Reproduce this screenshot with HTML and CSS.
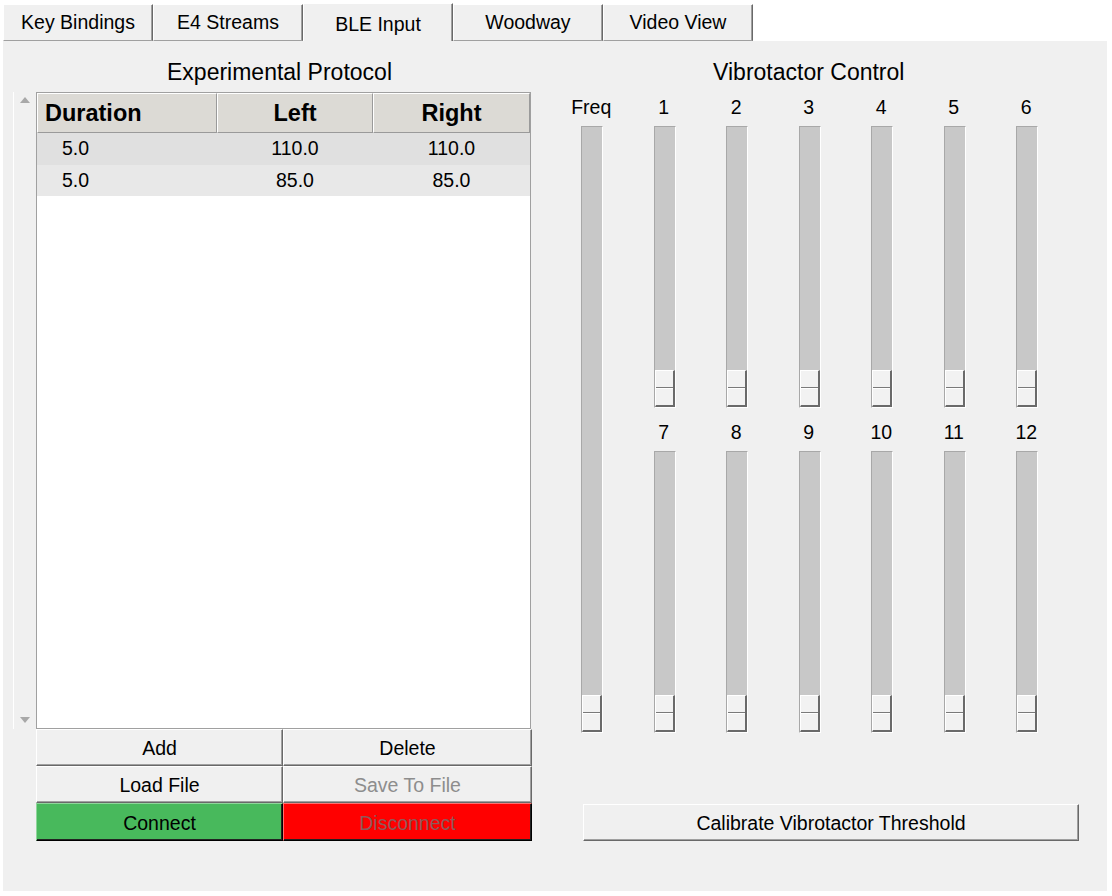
FILE: index.html
```html
<!DOCTYPE html>
<html>
<head>
<meta charset="utf-8">
<link rel="stylesheet" href="styles.css">
</head>
<body>
<div class="tabs">
  <div class="tab">Key Bindings</div>
  <div class="tab">E4 Streams</div>
  <div class="tab selected">BLE Input</div>
  <div class="tab">Woodway</div>
  <div class="tab">Video View</div>
</div>
<div class="panel">
  <section class="protocol">
    <h2 class="title">Experimental Protocol</h2>
    <div class="proto-body">
      <div class="scrollbar"><span class="arrow up"></span><span class="arrow down"></span></div>
      <div class="table">
        <div class="thead">
          <div class="th first">Duration</div>
          <div class="th">Left</div>
          <div class="th">Right</div>
        </div>
        <div class="row row1"><div class="td first">5.0</div><div class="td">110.0</div><div class="td">110.0</div></div>
        <div class="row row2"><div class="td first">5.0</div><div class="td">85.0</div><div class="td">85.0</div></div>
      </div>
    </div>
    <div class="buttons">
      <button class="btn">Add</button>
      <button class="btn">Delete</button>
      <button class="btn">Load File</button>
      <button class="btn disabled">Save To File</button>
      <button class="btn connect">Connect</button>
      <button class="btn disconnect">Disconnect</button>
    </div>
  </section>
  <section class="vibro">
    <h2 class="title">Vibrotactor Control</h2>
    <div class="sliders">
      <div class="lbl">Freq</div>
      <div class="slider freq"><div class="thumb"><span class="half top"></span><span class="half bottom"></span></div></div>
      <div class="lbl">1</div><div class="lbl">2</div><div class="lbl">3</div><div class="lbl">4</div><div class="lbl">5</div><div class="lbl">6</div>
      <div class="slider"><div class="thumb"><span class="half top"></span><span class="half bottom"></span></div></div>
      <div class="slider"><div class="thumb"><span class="half top"></span><span class="half bottom"></span></div></div>
      <div class="slider"><div class="thumb"><span class="half top"></span><span class="half bottom"></span></div></div>
      <div class="slider"><div class="thumb"><span class="half top"></span><span class="half bottom"></span></div></div>
      <div class="slider"><div class="thumb"><span class="half top"></span><span class="half bottom"></span></div></div>
      <div class="slider"><div class="thumb"><span class="half top"></span><span class="half bottom"></span></div></div>
      <div class="lbl">7</div><div class="lbl">8</div><div class="lbl">9</div><div class="lbl">10</div><div class="lbl">11</div><div class="lbl">12</div>
      <div class="slider"><div class="thumb"><span class="half top"></span><span class="half bottom"></span></div></div>
      <div class="slider"><div class="thumb"><span class="half top"></span><span class="half bottom"></span></div></div>
      <div class="slider"><div class="thumb"><span class="half top"></span><span class="half bottom"></span></div></div>
      <div class="slider"><div class="thumb"><span class="half top"></span><span class="half bottom"></span></div></div>
      <div class="slider"><div class="thumb"><span class="half top"></span><span class="half bottom"></span></div></div>
      <div class="slider"><div class="thumb"><span class="half top"></span><span class="half bottom"></span></div></div>
    </div>
    <button class="btn calib">Calibrate Vibrotactor Threshold</button>
  </section>
</div>
</body>
</html>
```

FILE: styles.css
```css
* { box-sizing: border-box; }

body {
  margin: 0;
  background: #fff;
  font-family: "Liberation Sans", Arial, sans-serif;
  font-size: 19.5px;
  color: #000;
  width: 1112px;
  height: 896px;
  overflow: hidden;
}

.tabs {
  display: flex;
  align-items: flex-end;
  padding-left: 3px;
  height: 41px;
}

.tab {
  width: 150px;
  height: 37px;
  background: #f0f0f0;
  border-top: 1px solid #fff;
  border-left: 1px solid #fff;
  border-right: 1px solid #696969;
  border-bottom: 1px solid #a0a0a0;
  box-shadow: inset -1px 0 0 #a0a0a0;
  display: flex;
  align-items: center;
  justify-content: center;
}

.tab.selected {
  height: 38px;
  border-bottom: none;
  padding-top: 3px;
}

.panel {
  margin-left: 3px;
  width: 1104px;
  height: 850px;
  background: #f0f0f0;
  display: flex;
  padding: 17px 0 0 10px;
}

.title {
  margin: 0;
  font-weight: normal;
  font-size: 23px;
  line-height: 28px;
  text-align: center;
}

.protocol {
  width: 519px;
  display: flex;
  flex-direction: column;
}

.protocol .title {
  margin-left: 23px;
  padding-right: 9px;
}

.proto-body {
  display: flex;
  margin-top: 6px;
  height: 637px;
}

.scrollbar {
  width: 23px;
  border-left: 1px solid #fff;
  display: flex;
  flex-direction: column;
  justify-content: space-between;
  align-items: center;
  padding: 5px 0 6px;
}

.arrow {
  width: 0;
  height: 0;
  border-left: 5px solid transparent;
  border-right: 5px solid transparent;
}

.arrow.up { border-bottom: 6px solid #a8a8a8; }
.arrow.down { border-top: 6px solid #a8a8a8; }

.table {
  width: 495px;
  border: 1px solid #a0a0a0;
  background: #fff;
}

.thead {
  display: grid;
  grid-template-columns: 180px 156px 157px;
  height: 40px;
}

.th {
  background: #dcdad5;
  border-top: 1px solid #fff;
  border-left: 1px solid #fff;
  border-right: 1px solid #9a9a9a;
  border-bottom: 1px solid #9a9a9a;
  font-weight: bold;
  font-size: 23.5px;
  display: flex;
  align-items: center;
  justify-content: center;
  padding-top: 1px;
}

.th.first {
  justify-content: flex-start;
  padding-left: 7px;
}

.row {
  display: grid;
  grid-template-columns: 180px 156px 157px;
  height: 31.5px;
  align-items: center;
}

.row1 { background: #e0e0e0; }
.row2 { background: #e8e8e8; }

.td { text-align: center; }
.td.first { text-align: left; padding-left: 25px; }

.buttons {
  display: grid;
  grid-template-columns: 247px 249px;
  grid-template-rows: 37px 37px 38px;
  margin-left: 23px;
}

.btn {
  font: inherit;
  color: #000;
  background: #f0f0f0;
  border-top: 1px solid #fff;
  border-left: 1px solid #fff;
  border-right: 1px solid #696969;
  border-bottom: 1px solid #696969;
  box-shadow: inset -1px -1px 0 #a0a0a0;
  display: flex;
  align-items: center;
  justify-content: center;
  padding: 2px 0 0;
}

.btn.disabled { color: #8d8d8d; }

.btn.connect {
  background: #48b95c;
  border-top-color: #8fd69b;
  border-left-color: #8fd69b;
  border-right-color: #000;
  border-bottom-color: #000;
  box-shadow: inset -1px -1px 0 #222;
}

.btn.disconnect {
  background: #ff0000;
  color: #8e5a5a;
  border-top-color: #ff7070;
  border-left-color: #ff7070;
  border-right-color: #000;
  border-bottom-color: #000;
  box-shadow: inset -1px -1px 0 #222;
}

.vibro {
  margin-left: 23px;
  width: 507.5px;
  display: flex;
  flex-direction: column;
}

.sliders {
  display: grid;
  grid-template-columns: repeat(7, 72.5px);
  grid-template-rows: 31px 282px 43px 282px;
  margin-top: 9px;
}

.lbl {
  align-self: end;
  text-align: center;
  line-height: 22px;
  padding-bottom: 8px;
}

.slider {
  justify-self: center;
  width: 22px;
  margin-left: 2px;
  background: #c8c8c8;
  border-top: 1px solid #a8a8a8;
  border-left: 1px solid #a8a8a8;
  border-right: 1px solid #fff;
  border-bottom: 1px solid #fff;
  display: flex;
  flex-direction: column;
  justify-content: flex-end;
}

.slider.freq {
  grid-column: 1;
  grid-row: 2 / 5;
}

.thumb {
  height: 37px;
  background: #f2f2f2;
  border-top: 1px solid #fff;
  border-left: 1px solid #fff;
  border-right: 2px solid #6a6a6a;
  border-bottom: 2px solid #6a6a6a;
  display: flex;
  flex-direction: column;
}

.half { flex: 1; }
.half.top { border-bottom: 1px solid #7a7a7a; }
.half.bottom { border-top: 1px solid #fff; }

.btn.calib {
  margin-top: 71px;
  margin-left: 28px;
  width: 496px;
  height: 37px;
}
```
